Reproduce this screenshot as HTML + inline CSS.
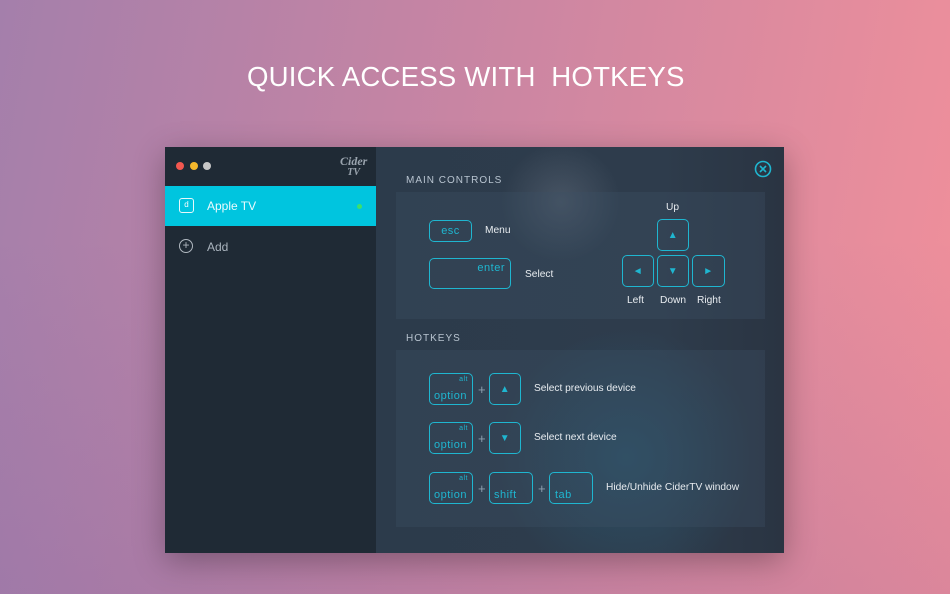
<!DOCTYPE html><html><head><style>
*{margin:0;padding:0;box-sizing:border-box}
body{width:950px;height:594px;overflow:hidden;font-family:"Liberation Sans",sans-serif;background:linear-gradient(100deg,#a47fab 0%,#c885a3 45%,#f2909a 100%);position:relative}
.ov{position:absolute;inset:0;background:linear-gradient(180deg,rgba(0,0,0,0) 40%,rgba(90,80,160,0.15) 100%)}
.t{position:absolute;top:61px;left:247px;color:#fff;font-size:27.6px;letter-spacing:0.2px;white-space:nowrap}
.win{position:absolute;left:165px;top:147px;width:619px;height:406px;background:#2a3848;box-shadow:0 8px 30px rgba(0,0,0,.3);overflow:hidden}
.side{position:absolute;left:0;top:0;width:211px;height:406px;background:#1f2a35}
.main{position:absolute;left:211px;top:0;width:408px;height:406px;background:radial-gradient(circle at 185px 55px,rgba(120,130,145,.35),rgba(0,0,0,0) 60px),radial-gradient(circle at 250px 310px,rgba(40,110,140,.4),rgba(0,0,0,0) 130px),linear-gradient(90deg,#2c3b4b,#2e3c4c 70%,#2a3442)}
.a{position:absolute}
.dot{position:absolute;top:15px;width:8px;height:8px;border-radius:50%}
.lbl{position:absolute;color:#b8c4d0;font-size:10px;letter-spacing:1px}
.box{position:absolute;left:20px;width:369px;background:rgba(60,80,100,.35)}
.k{position:absolute;border:1.5px solid #1fb6d0;border-radius:5px;color:#1fb6d0;font-size:11px;letter-spacing:.5px}
.w{position:absolute;color:#e8ecf0;font-size:10.2px}
.ar{display:flex;align-items:center;justify-content:center;font-size:10px}
</style></head><body><div class="ov"></div>
<div class="t">QUICK ACCESS WITH&nbsp; HOTKEYS</div>
<div class="win">
<div class="side">
<div class="dot" style="left:11px;background:#f2574f"></div>
<div class="dot" style="left:25px;background:#f5b82c"></div>
<div class="dot" style="left:38px;background:#c8c8c8"></div>
<div class="a" style="left:175px;top:9px;color:#9aa4ae;font-style:italic;font-family:'Liberation Serif',serif;font-size:12px;line-height:10px;text-align:center;font-weight:bold">Cider<br><span style="font-size:10px">TV</span></div>
<div class="a" style="left:0;top:39px;width:211px;height:40px;background:#00c5df"></div>
<div class="a" style="left:14px;top:51px;width:15px;height:15px;border:1.5px solid #e8f8fb;border-radius:3px;color:#fff;font-size:8px;text-align:center;line-height:12px">d</div>
<div class="a" style="left:42px;top:52px;color:#eafafd;font-size:12px">Apple TV</div>
<div class="a" style="left:192px;top:57px;width:5px;height:5px;border-radius:50%;background:#3ee06a"></div>
<div class="a" style="left:14px;top:92px;width:14px;height:14px;border:1.2px solid #b0b8c0;border-radius:50%;color:#b0b8c0;font-size:12px;text-align:center;line-height:11px">+</div>
<div class="a" style="left:42px;top:93px;color:#aab4be;font-size:12px">Add</div>
</div>
<div class="main">
<svg class="a" style="left:378px;top:13px" width="18" height="18" viewBox="0 0 18 18"><circle cx="9" cy="9" r="7.5" fill="none" stroke="#1fb6d0" stroke-width="1.6"/><path d="M6 6L12 12M12 6L6 12" stroke="#1fb6d0" stroke-width="1.6"/></svg>
<div class="lbl" style="left:30px;top:28px">MAIN CONTROLS</div>
<div class="box" style="top:45px;height:127px"></div>
<div class="lbl" style="left:30px;top:186px">HOTKEYS</div>
<div class="box" style="top:203px;height:177px"></div>
</div>
</div>
<div class="k ar" style="left:429px;top:220px;width:43px;height:22px;font-size:11px">esc</div>
<div class="w" style="left:485px;top:225px">Menu</div>
<div class="k" style="left:429px;top:258px;width:82px;height:31px;text-align:right;padding:3px 5px 0 0">enter</div>
<div class="w" style="left:525px;top:269px">Select</div>
<div class="w" style="left:666px;top:202px">Up</div>
<div class="k ar" style="left:657px;top:219px;width:32px;height:32px">▲</div>
<div class="k ar" style="left:622px;top:255px;width:32px;height:32px">◄</div>
<div class="k ar" style="left:657px;top:255px;width:32px;height:32px">▼</div>
<div class="k ar" style="left:692px;top:255px;width:33px;height:32px">►</div>
<div class="w" style="left:627px;top:295px">Left</div>
<div class="w" style="left:660px;top:295px">Down</div>
<div class="w" style="left:697px;top:295px">Right</div>

<div class="k" style="left:429px;top:373px;width:44px;height:32px"><div style="position:absolute;right:4px;top:2px;font-size:7px">alt</div><div style="position:absolute;left:4px;bottom:2px">option</div></div>
<div class="w" style="left:478px;top:382px;color:#8fa0b0;font-size:13px">+</div>
<div class="k ar" style="left:489px;top:373px;width:32px;height:32px">▲</div>
<div class="w" style="left:534px;top:383px">Select previous device</div>

<div class="k" style="left:429px;top:422px;width:44px;height:32px"><div style="position:absolute;right:4px;top:2px;font-size:7px">alt</div><div style="position:absolute;left:4px;bottom:2px">option</div></div>
<div class="w" style="left:478px;top:431px;color:#8fa0b0;font-size:13px">+</div>
<div class="k ar" style="left:489px;top:422px;width:32px;height:32px">▼</div>
<div class="w" style="left:534px;top:432px">Select next device</div>

<div class="k" style="left:429px;top:472px;width:44px;height:32px"><div style="position:absolute;right:4px;top:2px;font-size:7px">alt</div><div style="position:absolute;left:4px;bottom:2px">option</div></div>
<div class="w" style="left:478px;top:481px;color:#8fa0b0;font-size:13px">+</div>
<div class="k" style="left:489px;top:472px;width:44px;height:32px"><div style="position:absolute;left:4px;bottom:2px">shift</div></div>
<div class="w" style="left:538px;top:481px;color:#8fa0b0;font-size:13px">+</div>
<div class="k" style="left:549px;top:472px;width:44px;height:32px"><div style="position:absolute;left:5px;bottom:2px">tab</div></div>
<div class="w" style="left:606px;top:482px">Hide/Unhide CiderTV window</div>
</body></html>
